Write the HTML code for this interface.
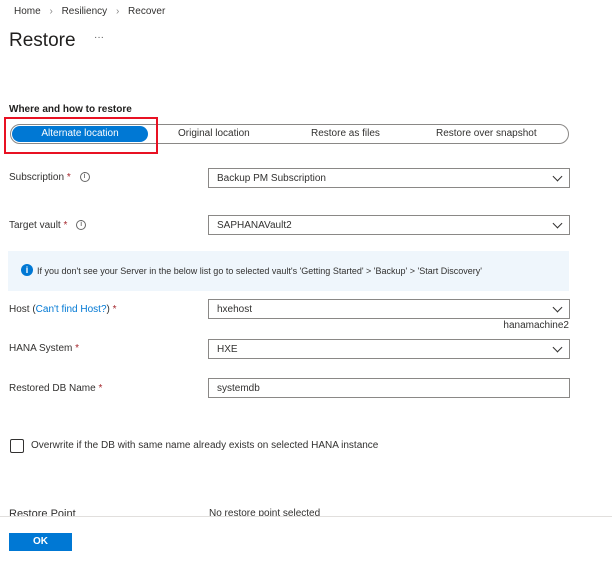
<!DOCTYPE html><html><head><style>
body{margin:0;width:612px;height:564px;overflow:hidden;background:#fff;font-family:"Liberation Sans",sans-serif;color:#323130;position:relative}
.a{position:absolute;white-space:nowrap}
.s{font-size:10px;line-height:12px}
.dd{position:absolute;left:208px;height:18px;border:1px solid #8a8886;font-size:10px;line-height:20px;padding-left:8px;box-sizing:content-box;width:352px}
.ch{position:absolute;right:8px;top:4px;width:6px;height:6px;border-right:1px solid #323130;border-bottom:1px solid #323130;transform:rotate(45deg)}
.st{color:#a4262c}
.ic{margin-left:6px;display:inline-block;width:8px;height:8px;border:1px solid #666;border-radius:50%;font-size:7px;text-align:center;line-height:8px;vertical-align:middle}
</style></head><body>
<div class="a s" style="left:14px;top:6px;color:#323130">Home <span style="color:#888;margin:0 6px">›</span> Resiliency <span style="color:#888;margin:0 6px">›</span> Recover</div>
<div class="a" style="left:9px;top:30px;font-size:19px;line-height:22px;color:#201f1e">Restore</div>
<div class="a" style="left:94px;top:32px;font-size:10px;color:#555">···</div>
<div class="a" style="left:9px;top:104px;font-size:10px;line-height:12px;font-weight:bold;color:#201f1e">Where and how to restore</div>
<div class="a" style="left:10px;top:124px;width:557px;height:18px;border:1px solid #8a8886;border-radius:10px"></div>
<div class="a s" style="left:12px;top:126px;width:136px;height:16px;background:#0078d4;border-radius:8px;color:#fff;text-align:center;line-height:16px">Alternate location</div>
<div class="a" style="left:4px;top:117px;width:150px;height:33px;border:2px solid #e81123"></div>
<div class="a s" style="left:178px;top:128px">Original location</div>
<div class="a s" style="left:311px;top:128px">Restore as files</div>
<div class="a s" style="left:436px;top:128px">Restore over snapshot</div>
<div class="a s" style="left:9px;top:172px">Subscription <span class="st">*</span> <span class="ic">i</span></div>
<div class="dd" style="top:168px">Backup PM Subscription<div class="ch"></div></div>
<div class="a s" style="left:9px;top:220px">Target vault <span class="st">*</span> <span class="ic">i</span></div>
<div class="dd" style="top:215px">SAPHANAVault2<div class="ch"></div></div>
<div class="a" style="left:8px;top:251px;width:561px;height:40px;background:#eff6fc"></div>
<div class="a" style="left:21px;top:264px;width:12px;height:12px;border-radius:50%;background:#0078d4;color:#fff;font-size:9px;font-weight:bold;text-align:center;line-height:12px">i</div>
<div class="a" style="left:37px;top:265px;font-size:9px;line-height:12px">If you don't see your Server in the below list go to selected vault's 'Getting Started' &gt; 'Backup' &gt; 'Start Discovery'</div>
<div class="a s" style="left:9px;top:304px">Host (<span style="color:#0078d4">Can't find Host?</span>) <span class="st">*</span></div>
<div class="dd" style="top:299px">hxehost<div class="ch"></div></div>
<div class="a s" style="right:43px;top:320px">hanamachine2</div>
<div class="a s" style="left:9px;top:343px">HANA System <span class="st">*</span></div>
<div class="dd" style="top:339px">HXE<div class="ch"></div></div>
<div class="a s" style="left:9px;top:383px">Restored DB Name <span class="st">*</span></div>
<div class="dd" style="top:378px">systemdb</div>
<div class="a" style="left:10px;top:439px;width:12px;height:12px;border:1px solid #323130;border-radius:2px"></div>
<div class="a s" style="left:31px;top:440px">Overwrite if the DB with same name already exists on selected HANA instance</div>
<div class="a" style="left:0;top:505px;width:612px;height:11px;overflow:hidden">
<div class="a" style="left:9px;top:3px;font-size:11px">Restore Point</div>
<div class="a s" style="left:209px;top:3px">No restore point selected</div></div>
<div class="a" style="left:0;top:516px;width:612px;height:1px;background:#e1dfdd"></div>
<div class="a" style="left:9px;top:533px;width:63px;height:18px;background:#0078d4;color:#fff;font-size:10px;font-weight:bold;text-align:center;line-height:18px">OK</div>
</body></html>
